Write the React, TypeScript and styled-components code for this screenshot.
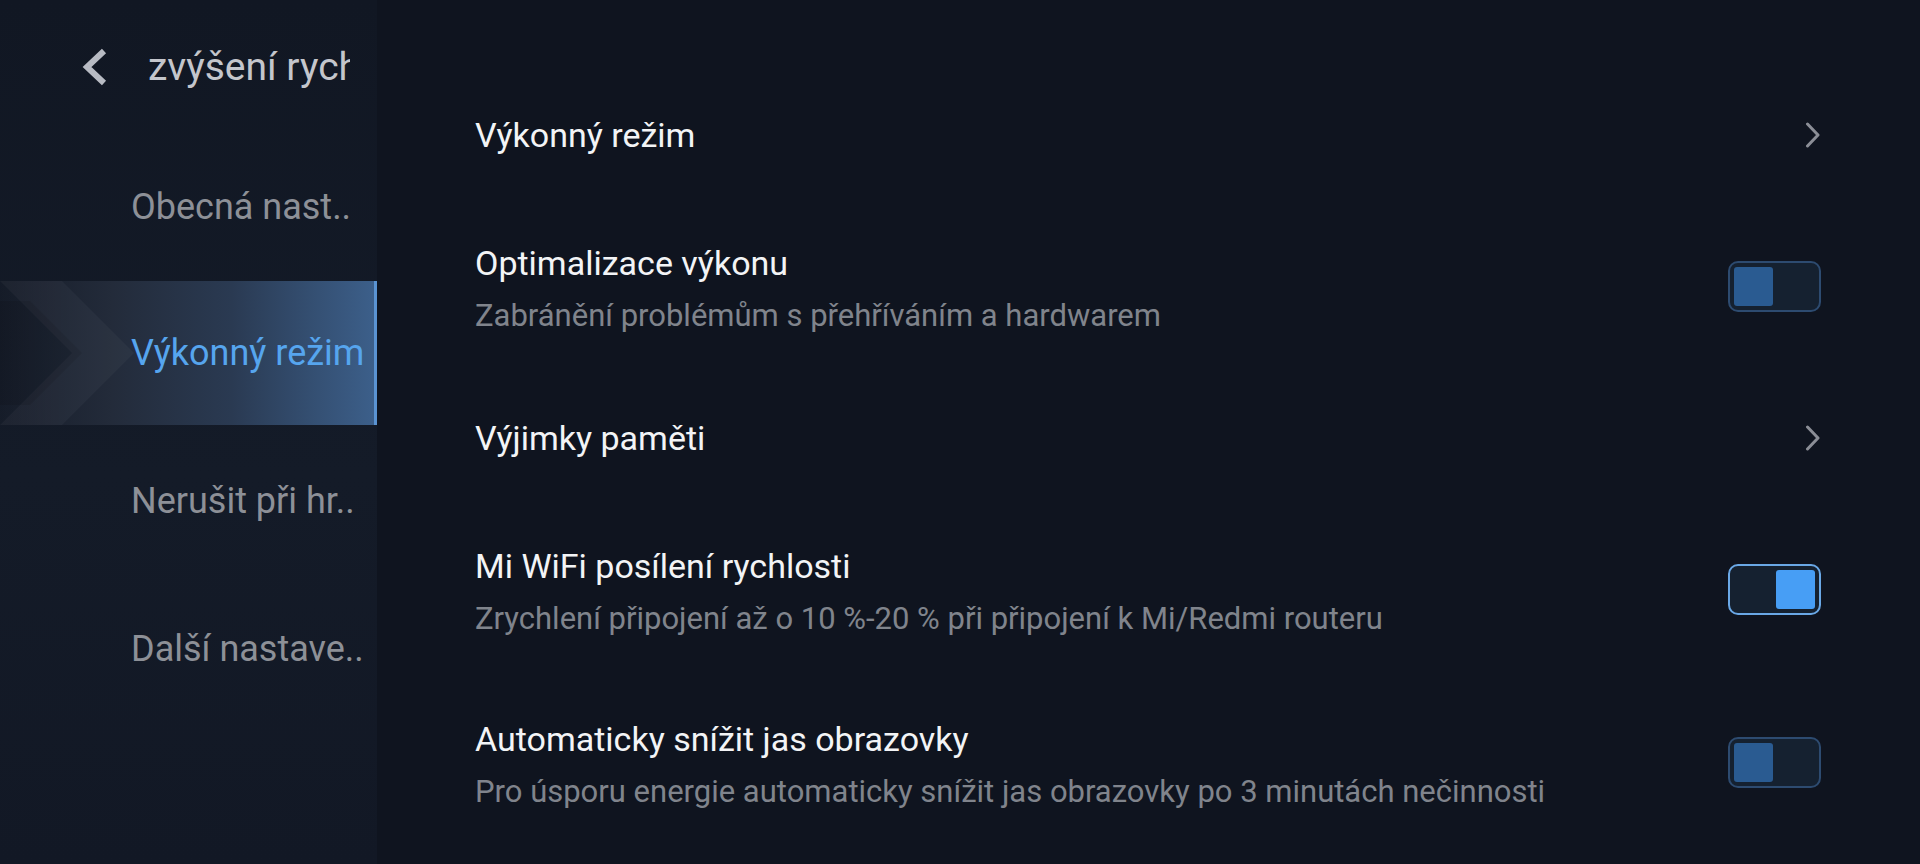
import React, { useState } from 'react';
import styled, { createGlobalStyle } from 'styled-components';

const GlobalStyle = createGlobalStyle`
  html, body {
    margin: 0;
    padding: 0;
    background: #0f141f;
  }
  * {
    box-sizing: border-box;
  }
`

type MenuItem = { label: string }
type Row = { title: string; subtitle?: string; kind: 'link' | 'toggle'; on?: boolean }

const menu: MenuItem[] = [
  { label: 'Obecná nast..' },
  { label: 'Výkonný režim' },
  { label: 'Nerušit při hr..' },
  { label: 'Další nastave..' },
]

const initialRows: Row[] = [
  { title: 'Výkonný režim', kind: 'link' },
  { title: 'Optimalizace výkonu', subtitle: 'Zabránění problémům s přehříváním a hardwarem', kind: 'toggle', on: false },
  { title: 'Výjimky paměti', kind: 'link' },
  { title: 'Mi WiFi posílení rychlosti', subtitle: 'Zrychlení připojení až o 10 %-20 % při připojení k Mi/Redmi routeru', kind: 'toggle', on: true },
  { title: 'Automaticky snížit jas obrazovky', subtitle: 'Pro úsporu energie automaticky snížit jas obrazovky po 3 minutách nečinnosti', kind: 'toggle', on: false },
]

const BackIcon = () => (
  <svg width="30" height="40" viewBox="0 0 30 40">
    <path d="M24 4 L7 20 L24 36" fill="none" stroke="#b8bbc3" strokeWidth="6" strokeLinejoin="miter" />
  </svg>
)

const Chevron = () => (
  <svg width="16" height="26" viewBox="0 0 16 26">
    <path d="M2.5 2 L13 13 L2.5 24" fill="none" stroke="#8b8e96" strokeWidth="3" strokeLinecap="round" strokeLinejoin="round" />
  </svg>
)

const SelectedArrows = () => (
  <ArrowArt viewBox="0 0 160 144" preserveAspectRatio="none">
    <polygon points="0,0 62,0 134,72 62,144 0,144 72,72" fill="#ffffff" fillOpacity="0.035" />
    <polygon points="0,20 30,20 82,72 30,124 0,124" fill="#000000" fillOpacity="0.08" />
  </ArrowArt>
)

export default function App() {
  const [rows, setRows] = useState(initialRows)
  const active = 1

  const flip = (i: number) =>
    setRows(rows.map((r, j) => (j === i ? { ...r, on: !r.on } : r)))

  return (
    <>
      <GlobalStyle />
      <Screen>
        <Sidebar>
          <Header>
            <BackButton><BackIcon /></BackButton>
            <HeaderTitle>zvýšení rychlosti</HeaderTitle>
          </Header>
          <Menu>
            {menu.map((m, i) => (
              <MenuEntry key={m.label} $active={i === active}>
                {i === active && <SelectedArrows />}
                <MenuLabel $active={i === active}>{m.label}</MenuLabel>
              </MenuEntry>
            ))}
          </Menu>
        </Sidebar>

        <Content>
          {rows.map((r, i) => (
            <SettingRow key={r.title} $double={!!r.subtitle}>
              <TextBlock $double={!!r.subtitle}>
                <RowTitle>{r.title}</RowTitle>
                {r.subtitle && <RowSubtitle>{r.subtitle}</RowSubtitle>}
              </TextBlock>
              {r.kind === 'link' ? (
                <Chevron />
              ) : (
                <Toggle $on={!!r.on} onClick={() => flip(i)}>
                  <Knob $on={!!r.on} />
                </Toggle>
              )}
            </SettingRow>
          ))}
        </Content>
      </Screen>
    </>
  )
}

const Screen = styled.div`
  display: flex;
  width: 1920px;
  height: 864px;
  overflow: hidden;
  background: #0f141f;
  font-family: Roboto, "Noto Sans", "Liberation Sans", sans-serif;
`

const Sidebar = styled.aside`
  width: 377px;
  flex-shrink: 0;
  display: flex;
  flex-direction: column;
  background: linear-gradient(180deg, #111723 0%, #141b28 55%, #121825 100%);
`

const Header = styled.div`
  height: 133px;
  display: flex;
  align-items: center;
  padding-left: 80px;
  gap: 38px;
`

const BackButton = styled.div`
  display: flex;
  align-items: center;
`

const HeaderTitle = styled.div`
  width: 202px;
  overflow: hidden;
  white-space: nowrap;
  font-size: 39px;
  color: #c4c6cc;
  line-height: 46px;
`

const Menu = styled.div`
  display: flex;
  flex-direction: column;
`

const MenuEntry = styled.div<{ $active: boolean }>`
  position: relative;
  display: flex;
  align-items: center;
  padding-left: 131px;
  background: ${p => p.$active
    ? 'linear-gradient(90deg, rgba(30,36,48,0.2) 0%, #232b3a 30%, #2a3a52 62%, #3c5f8a 100%)'
    : 'transparent'};
  border-right: ${p => p.$active ? '3px solid #5a93d2' : '3px solid transparent'};
  margin: ${p => p.$active ? '0 0 2px' : '0'};
  height: ${p => p.$active ? '144px' : '148px'};
`

const ArrowArt = styled.svg`
  position: absolute;
  left: 0;
  top: 0;
  width: 160px;
  height: 100%;
`

const MenuLabel = styled.span<{ $active: boolean }>`
  position: relative;
  font-size: 36px;
  white-space: nowrap;
  color: ${p => p.$active ? '#56a5ee' : '#8d9097'};
`

const Content = styled.main`
  flex: 1;
  display: flex;
  flex-direction: column;
  padding: 70px 99px 0 98px;
`

const SettingRow = styled.div<{ $double: boolean }>`
  height: ${p => p.$double ? '173px' : '130px'};
  display: flex;
  align-items: center;
  justify-content: space-between;
`

const TextBlock = styled.div<{ $double: boolean }>`
  display: flex;
  flex-direction: column;
  padding-top: ${p => p.$double ? '5px' : '0'};
`

const RowTitle = styled.div`
  font-size: 34px;
  line-height: 42px;
  color: #f3f4f6;
`

const RowSubtitle = styled.div`
  margin-top: 12px;
  font-size: 31px;
  line-height: 40px;
  color: #80848c;
`

const Toggle = styled.div<{ $on: boolean }>`
  width: 93px;
  height: 51px;
  border-radius: 10px;
  border: 2px solid ${p => p.$on ? '#6aa8e6' : '#2d4b70'};
  background: #152130;
  padding: 4px;
  display: flex;
  justify-content: ${p => p.$on ? 'flex-end' : 'flex-start'};
  cursor: pointer;
`

const Knob = styled.div<{ $on: boolean }>`
  width: 39px;
  height: 39px;
  border-radius: 3px;
  background: ${p => p.$on ? '#479ef5' : '#2a5b91'};
`
